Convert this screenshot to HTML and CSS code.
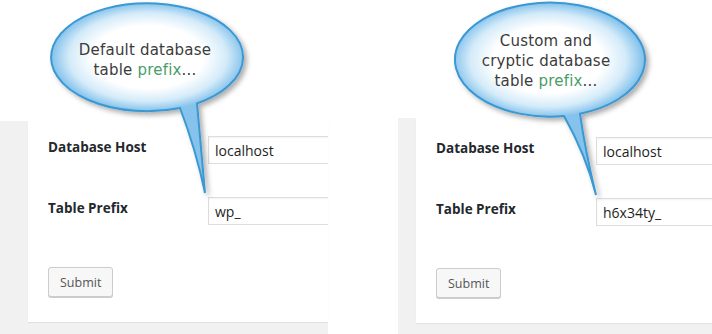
FILE: index.html
```html
<!DOCTYPE html>
<html lang="en">
<head>
  <meta charset="UTF-8" />
  <meta name="viewport" content="width=device-width, initial-scale=1.0" />
  <title>Database table prefix — before and after</title>
  <link rel="stylesheet" href="styles.css">
</head>
<body>

  <main class="compare">

    <!-- Default prefix -->
    <section class="shot shot-default">
      <div class="screen">
        <form class="card">
          <div class="row">
            <label for="hostA">Database Host</label>
            <input id="hostA" class="field" type="text" value="localhost" />
          </div>
          <div class="row">
            <label for="prefixA">Table Prefix</label>
            <input id="prefixA" class="field" type="text" value="wp_" />
          </div>
          <button type="button" class="btn">Submit</button>
        </form>
      </div>

      <svg class="bubble" viewBox="0 0 356 200" xmlns="http://www.w3.org/2000/svg">
        <defs>
          <radialGradient id="glowA" gradientUnits="userSpaceOnUse" cx="0" cy="0" r="1"
                          gradientTransform="translate(148 57) scale(96 54)">
            <stop offset="0" stop-color="#ffffff"/>
            <stop offset="0.58" stop-color="#ffffff"/>
            <stop offset="0.82" stop-color="#d4ebf9"/>
            <stop offset="1" stop-color="#86c3ec"/>
          </radialGradient>
          <filter id="dropA" x="-20%" y="-20%" width="140%" height="140%">
            <feDropShadow dx="3" dy="3" stdDeviation="2.5" flood-color="#000" flood-opacity="0.32"/>
          </filter>
        </defs>
        <path d="M180 108 Q196 150 205 193 Q201 148 197 103.4 A96 54 0 1 0 180 108 Z"
              fill="url(#glowA)" stroke="#3a98d3" stroke-width="2" filter="url(#dropA)"/>
      </svg>
      <p class="bubble-text">Default database<br>table <em>prefix</em>...</p>
    </section>

    <!-- Custom prefix -->
    <section class="shot shot-custom">
      <div class="screen">
        <form class="card">
          <div class="row">
            <label for="hostB">Database Host</label>
            <input id="hostB" class="field" type="text" value="localhost" />
          </div>
          <div class="row">
            <label for="prefixB">Table Prefix</label>
            <input id="prefixB" class="field" type="text" value="h6x34ty_" />
          </div>
          <button type="button" class="btn">Submit</button>
        </form>
      </div>

      <svg class="bubble" viewBox="0 0 356 200" xmlns="http://www.w3.org/2000/svg">
        <defs>
          <radialGradient id="glowB" gradientUnits="userSpaceOnUse" cx="0" cy="0" r="1"
                          gradientTransform="translate(192 60) scale(95 57)">
            <stop offset="0" stop-color="#ffffff"/>
            <stop offset="0.58" stop-color="#ffffff"/>
            <stop offset="0.82" stop-color="#d4ebf9"/>
            <stop offset="1" stop-color="#86c3ec"/>
          </radialGradient>
          <filter id="dropB" x="-20%" y="-20%" width="140%" height="140%">
            <feDropShadow dx="3" dy="3" stdDeviation="2.5" flood-color="#000" flood-opacity="0.32"/>
          </filter>
        </defs>
        <path d="M208 116 Q230 155 240 195 Q229 150 224 113.7 A95 57 0 1 0 208 116 Z"
              fill="url(#glowB)" stroke="#3a98d3" stroke-width="2" filter="url(#dropB)"/>
      </svg>
      <p class="bubble-text">Custom and<br>cryptic database<br>table <em>prefix</em>...</p>
    </section>

  </main>

</body>
</html>
```

FILE: styles.css
```css
/* ===== Palette ===== */
:root {
  --page-bg: #ffffff;
  --admin-bg: #f1f1f1;
  --card-bg: #ffffff;
  --label: #23282d;
  --input-text: #1e1e1e;
  --input-border: #dddddd;
  --btn-bg: #f7f7f7;
  --btn-border: #cccccc;
  --btn-text: #555555;
  --bubble-text: #3c3c3c;
  --bubble-accent: #4a9d68;
}

/* Reset & Base */
*, *::before, *::after { box-sizing: border-box; margin: 0; padding: 0; }
html, body { width: 712px; height: 334px; overflow: hidden; }
body {
  font-family: 'Open Sans', sans-serif;
  background: var(--page-bg);
}

.compare {
  display: flex;
  height: 334px;
}

/* One screenshot */
.shot {
  position: relative;
  width: 356px;
  display: flex;
  flex-direction: column;
}
.shot-default { padding-top: 121px; }
.shot-custom { padding-top: 118px; }

.screen {
  flex: 1;
  display: flex;
  background: var(--admin-bg);
}
.shot-default .screen { margin-right: 28px; padding: 0 0 12px 28px; }
.shot-custom .screen { margin-left: 42px; padding: 0 0 11px 18px; }

/* Settings card */
.card {
  flex: 1;
  display: flex;
  flex-direction: column;
  align-items: flex-start;
  background: var(--card-bg);
  box-shadow: 0 1px 1px rgba(0,0,0,0.06);
  overflow: hidden;
  padding: 15px 0 25px 20px;
}
.shot-custom .card { padding-top: 19px; }

.row {
  display: grid;
  grid-template-columns: 160px 220px;
  align-items: start;
  margin-bottom: 33px;
}
.row:last-of-type { margin-bottom: 42px; }

.row label {
  font-size: 13.5px;
  font-weight: 700;
  line-height: 20px;
  color: var(--label);
  padding-top: 1px;
}

.field {
  height: 28px;
  padding: 0 6px;
  border: 1px solid var(--input-border);
  box-shadow: inset 0 1px 2px rgba(0,0,0,0.05);
  font-family: 'Open Sans', sans-serif;
  font-size: 14px;
  color: var(--input-text);
  background: #fff;
  outline: none;
}

.btn {
  height: 30px;
  padding: 0 11px;
  border: 1px solid var(--btn-border);
  border-radius: 3px;
  background: var(--btn-bg);
  box-shadow: 0 1px 0 #cccccc;
  font-family: 'Open Sans', sans-serif;
  font-size: 12.5px;
  color: var(--btn-text);
  cursor: pointer;
}

/* Speech bubbles (drawn over the screenshot) */
.bubble {
  position: absolute;
  top: 0;
  left: 0;
  width: 356px;
  height: 200px;
  overflow: visible;
  pointer-events: none;
}

.bubble-text {
  position: absolute;
  width: 180px;
  font-family: 'DejaVu Sans', sans-serif;
  font-size: 15px;
  line-height: 20px;
  letter-spacing: 0.2px;
  text-align: center;
  color: var(--bubble-text);
}
.bubble-text em {
  font-style: normal;
  color: var(--bubble-accent);
}
.shot-default .bubble-text { left: 55px; top: 40px; }
.shot-custom .bubble-text { left: 100px; top: 31px; }
```
